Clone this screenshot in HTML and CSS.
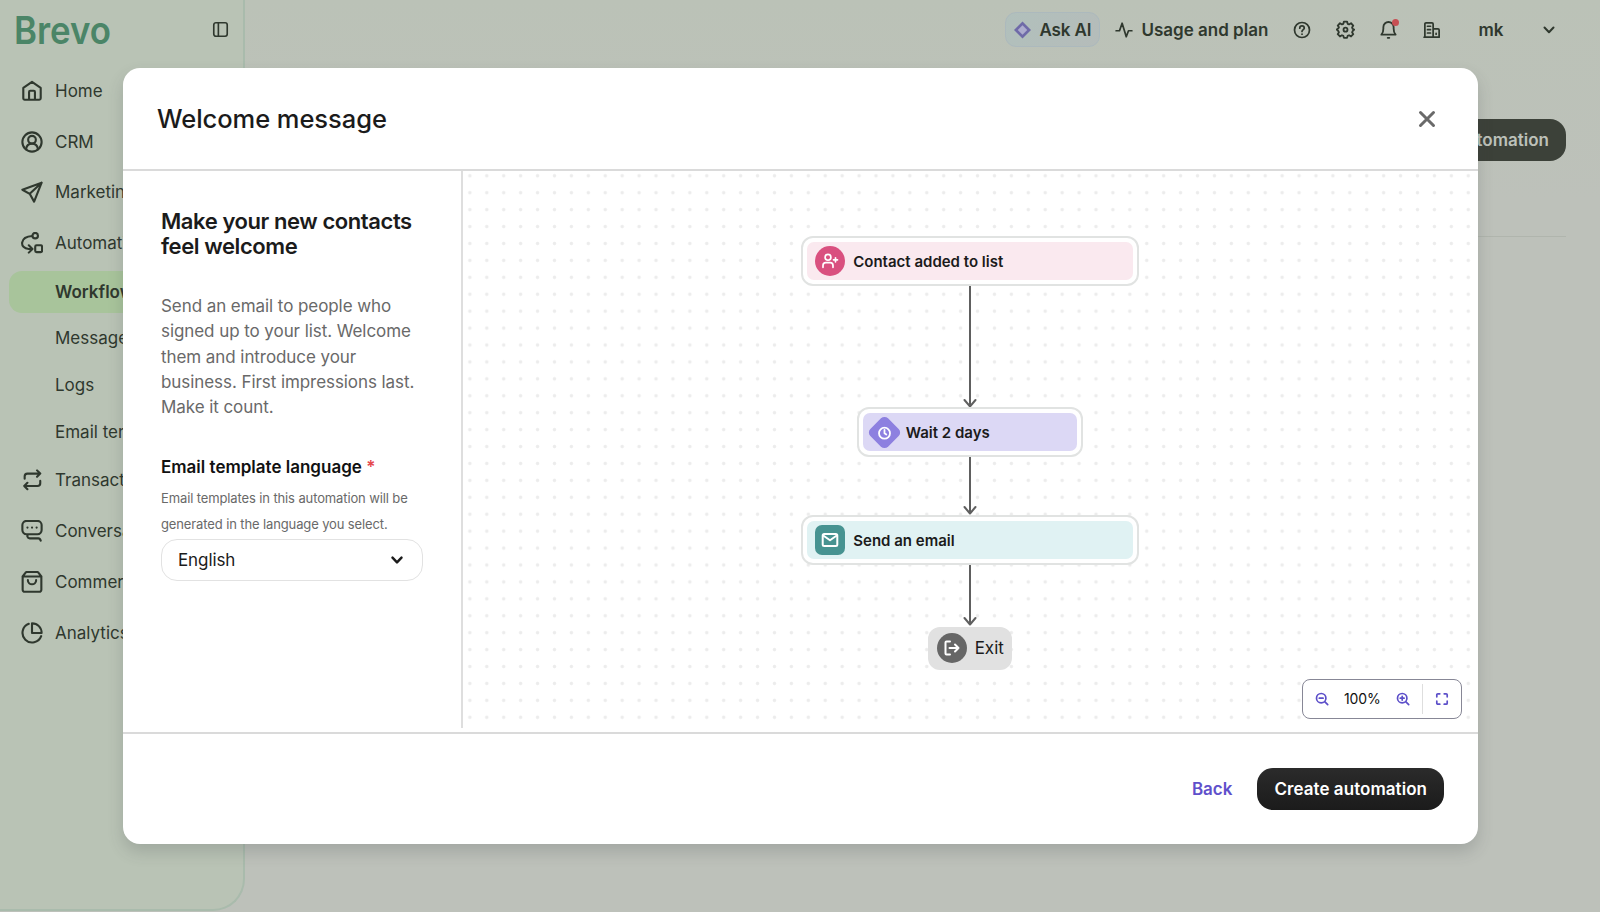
FILE: index.html
```html
<!DOCTYPE html>
<html lang="en">
<head>
    <meta charset="UTF-8">
    <meta name="viewport" content="width=device-width, initial-scale=1.0">
    <title>Brevo - Welcome message</title>
    <link rel="stylesheet" href="styles.css">
</head>
<body>
    <div class="app">
        <aside class="sidebar">
            <div class="sidebar-head">
                <svg class="logo" width="104" height="48" viewBox="0 0 104 48">
                    <text x="0" y="38" textLength="97" lengthAdjust="spacingAndGlyphs">Brevo</text>
                </svg>
                <svg class="icon" width="17" height="17" viewBox="0 0 24 24"><rect x="2.5" y="2.5" width="19" height="19" rx="3"/><path d="M9 2.5v19"/></svg>
            </div>
            <nav class="menu">
                <a class="item">
                    <svg class="icon" width="22" height="22" viewBox="0 0 24 24"><path d="M2.500 8.500 12 2l9.500 6.500V20a1.500 1.500 0 0 1-1.500 1.500H4A1.500 1.500 0 0 1 2.500 20zM8.800 21.500V13a1.200 1.200 0 0 1 1.200-1.200h4a1.200 1.200 0 0 1 1.200 1.200v8.500"/></svg>
                    Home
                </a>
                <a class="item">
                    <svg class="icon" width="22" height="22" viewBox="0 0 24 24"><circle cx="12" cy="12" r="10.500"/><circle cx="12" cy="9.500" r="4.200"/><path d="M5.500 20c.4-4 3-6.200 6.500-6.200s6.100 2.200 6.500 6.200"/></svg>
                    CRM
                </a>
                <a class="item">
                    <svg class="icon" width="22" height="22" viewBox="0 0 24 24"><path d="M22.500 1.800 1.500 9.500l8 4.500 4.800 8.500zM22.500 1.800 9.500 14"/></svg>
                    Marketing
                </a>
                <a class="item">
                    <svg class="icon" width="22" height="22" viewBox="0 0 24 24"><circle cx="15.500" cy="4" r="3"/><rect x="15.500" y="14.500" width="7.500" height="7.500" rx="1.500"/><path d="M12.300 4.300C-1.500 5-2 18 8.500 18.500H12M8.500 14.500l4 4-4 4"/></svg>
                    Automations
                </a>
                <div class="submenu">
                    <a class="sub active">Workflows</a>
                    <a class="sub">Messages</a>
                    <a class="sub">Logs</a>
                    <a class="sub">Email templates</a>
                </div>
                <a class="item">
                    <svg class="icon" width="22" height="22" viewBox="0 0 24 24"><path d="M17.500 1.500 21 5l-3.500 3.500M21 5H7a3 3 0 0 0-3 3v2.500M7 15l-3.500 3.500L7 22M3.500 18.500H18a3 3 0 0 0 3-3V13"/></svg>
                    Transactional
                </a>
                <a class="item">
                    <svg class="icon" width="22" height="22" viewBox="0 0 24 24"><path d="M8 15.500H6a4.500 4.500 0 0 1-4.500-4.500V5.500A4.500 4.500 0 0 1 6 1h12a4.500 4.500 0 0 1 4.500 4.500V11a4.500 4.500 0 0 1-4.500 4.500H8c-2 1.500-1 4.500 1.500 4.500H19c1 0 2 .8 2.500 2.500"/><path d="M7 8.300h.1M12 8.300h.1M17 8.300h.1"/></svg>
                    Conversations
                </a>
                <a class="item">
                    <svg class="icon" width="22" height="22" viewBox="0 0 24 24"><path d="M1.800 6v14.500A2.200 2.200 0 0 0 4 22.700h16a2.200 2.200 0 0 0 2.200-2.200V6M1.800 6h20.400M1.800 6 5 1.800Q5.500 1 6.500 1h11q1 0 1.500.8L22.200 6M7.500 10c0 6 9 6 9 0"/></svg>
                    Commerce
                </a>
                <a class="item">
                    <svg class="icon" width="22" height="22" viewBox="0 0 24 24"><path d="M8.500 2A10.500 10.500 0 1 0 22 15.500M12 1.500V12h10.500C22.500 6 18 1.500 12 1.500z"/></svg>
                    Analytics
                </a>
            </nav>
        </aside>

        <main class="page">
            <header class="topbar">
                <button class="ask-ai">
                    <svg width="17" height="18" viewBox="0 0 18 18"><path class="gem" d="M9 0 18 9 9 18 0 9z"/><path class="gem-mid" d="M9 4 14 9 9 14 4 9z"/></svg>
                    Ask AI
                </button>
                <span class="usage">
                    <svg class="icon" width="18" height="18" viewBox="0 0 24 24"><path d="M1.500 13H6L9.500 3l5.500 18 3-8h4.500"/></svg>
                    Usage and plan
                </span>
                <svg class="icon" width="18" height="18" viewBox="0 0 24 24"><circle cx="12" cy="12" r="10"/><path d="M9 9.500c0-4 6-4 6 0 0 2-3 2-3 4.500M12 17.500h.1"/></svg>
                <svg class="icon" width="19" height="19" viewBox="0 0 24 24"><path d="M10 2h4l.7 2.800 1.800.8 2.500-1.500 2.800 2.900-1.500 2.400.7 1.800L23 12l-2 2-.7 1.500 1.500 2.400L19 20.800l-2.500-1.500-1.800.8L14 22.500h-4l-.7-2.400-1.800-.8L5 20.800l-2.800-2.900 1.500-2.400L3 14l-2-2 2-1.500.7-1.200L2.200 7 5 4.100l2.500 1.500 1.800-.8z"/><circle cx="12" cy="12.200" r="2.500"/></svg>
                <span class="bell">
                    <svg class="icon" width="19" height="19" viewBox="0 0 24 24"><path d="M3 18.500c3-3 2.500-5 2.500-9.500a6.500 6.500 0 0 1 13 0c0 4.500-.5 6.500 2.500 9.500zM11 22.500h2"/></svg>
                    <i class="badge"></i>
                </span>
                <svg class="icon" width="18" height="18" viewBox="0 0 24 24"><path d="M2.500 21.500V4A1.500 1.500 0 0 1 4 2.500h8A1.500 1.500 0 0 1 13.500 4v17.500M13.500 10.500h6.500a1.500 1.500 0 0 1 1.500 1.500v9.500h-20M6 7h4M6 11.500h4M6 16h4M17.500 16.500v1"/></svg>
                <span class="account">mk</span>
                <svg class="icon chevron" width="14" height="14" viewBox="0 0 14 14"><path d="m2.500 4.500 4.500 4.700 4.500-4.700"/></svg>
            </header>
            <div class="page-head">
                <button class="dark-btn dimmed">Create an automation</button>
            </div>
        </main>
    </div>

    <div class="modal">
        <header class="modal-head">
            <h1>Welcome message</h1>
            <svg class="close" width="18" height="18" viewBox="0 0 18 18"><path d="m2.500 2.500 13 13M15.500 2.500l-13 13"/></svg>
        </header>

        <div class="modal-body">
            <section class="details">
                <h2>Make your new contacts feel welcome</h2>
                <p class="description">Send an email to people who signed up to your list. Welcome them and introduce your business. First impressions last. Make it count.</p>
                <label>Email template language <span class="required">*</span></label>
                <p class="hint">Email templates in this automation will be generated in the language you select.</p>
                <div class="select">
                    English
                    <svg width="14" height="14" viewBox="0 0 14 14"><path d="m2.500 4.700 4.500 4.600 4.500-4.600"/></svg>
                </div>
            </section>

            <section class="canvas">
                <div class="node wide">
                    <div class="node-inner pink">
                        <span class="node-icon round">
                            <svg width="18" height="18" viewBox="0 0 18 18"><circle cx="7" cy="5.300" r="2.900"/><path d="M2 15.300v-1.800a2.800 2.800 0 0 1 2.800-2.800h4.400a2.800 2.800 0 0 1 2.800 2.800v1.800M14.500 5.800v4M12.500 7.800h4"/></svg>
                        </span>
                        Contact added to list
                    </div>
                </div>
                <svg class="arrow" width="14" height="121" viewBox="0 0 14 121"><path d="M7 0v120M1.500 114l5.500 6.500 5.500-6.500"/></svg>
                <div class="node">
                    <div class="node-inner purple">
                        <span class="node-icon diamond">
                            <svg width="14" height="14" viewBox="0 0 14 14"><circle cx="7" cy="7" r="5.500"/><path d="M7 3.800V7l1.800 1.300"/></svg>
                        </span>
                        Wait 2 days
                    </div>
                </div>
                <svg class="arrow" width="14" height="58" viewBox="0 0 14 58"><path d="M7 0v56M1.500 50l5.500 6.500 5.500-6.500"/></svg>
                <div class="node wide">
                    <div class="node-inner teal">
                        <span class="node-icon square">
                            <svg width="18" height="18" viewBox="0 0 18 18"><rect x="1.700" y="3" width="14.600" height="12" rx="1.500"/><path d="m2.200 4.500 6.800 4.800 6.800-4.800"/></svg>
                        </span>
                        Send an email
                    </div>
                </div>
                <svg class="arrow" width="14" height="62" viewBox="0 0 14 62"><path d="M7 0v59M1.500 53l5.500 6.500 5.500-6.500"/></svg>
                <div class="exit">
                    <span class="node-icon round">
                        <svg width="18" height="18" viewBox="0 0 18 18"><path d="M7 2.500H3.500a1 1 0 0 0-1 1v11a1 1 0 0 0 1 1H7M6.500 9h9M12 5.500 15.500 9 12 12.500"/></svg>
                    </span>
                    Exit
                </div>

                <div class="zoom">
                    <svg width="14" height="14" viewBox="0 0 14 14"><circle cx="6.200" cy="6.200" r="4.700"/><path d="m9.700 9.700 3 3M4.300 6.200h3.800"/></svg>
                    <span class="zoom-value">100%</span>
                    <svg width="14" height="14" viewBox="0 0 14 14"><circle cx="6.200" cy="6.200" r="4.700"/><path d="m9.700 9.700 3 3M4.300 6.200h3.800M6.200 4.300v3.800"/></svg>
                    <span class="zoom-sep"></span>
                    <svg width="14" height="14" viewBox="0 0 14 14"><path d="M1.800 4.800v-2a1 1 0 0 1 1-1h2M9.200 1.800h2a1 1 0 0 1 1 1v2M12.200 9.200v2a1 1 0 0 1-1 1h-2M4.800 12.200h-2a1 1 0 0 1-1-1v-2"/></svg>
                </div>
            </section>
        </div>

        <footer class="modal-foot">
            <a class="back">Back</a>
            <button class="dark-btn">Create automation</button>
        </footer>
    </div>
</body>
</html>
```
FILE: styles.css
```css
* {
    box-sizing: border-box;
}
body {
    margin: 0;
    height: 912px;
    overflow: hidden;
    font-family: Inter, sans-serif;
    font-size: 17px;
    background: #bdc1ba;
    color: #1b1b1b;
}
h1, h2, p {
    margin: 0;
}
button {
    border: none;
    font-family: inherit;
    cursor: pointer;
}
svg {
    display: block;
    flex: none;
    fill: none;
    stroke: currentColor;
    stroke-width: 2;
    stroke-linecap: round;
    stroke-linejoin: round;
}
.icon {
    stroke-width: 2.300;
}

/* page behind the modal */
.app {
    display: flex;
    height: 912px;
    color: #2f382e;
}
.sidebar {
    width: 245px;
    height: 911px;
    background: #b9c3b5;
    border-right: 2px solid #a9bbac;
    border-bottom: 2px solid #a9bbac;
    border-bottom-right-radius: 32px;
}
.sidebar-head {
    display: flex;
    justify-content: space-between;
    align-items: center;
    padding: 11px 14px 0 14px;
    height: 48px;
}
.logo text {
    font-family: Inter, sans-serif;
    font-size: 38.5px;
    font-weight: 600;
    fill: #4b8567;
    stroke: none;
}
.menu {
    display: flex;
    flex-direction: column;
    gap: 8.5px;
    padding: 21.700px 8px 0 9px;
}
.item {
    display: flex;
    align-items: center;
    gap: 12px;
    height: 42.300px;
    padding-left: 12px;
    white-space: nowrap;
}
.submenu {
    display: flex;
    flex-direction: column;
    gap: 4.300px;
    margin: -2px 0 -2.300px;
}
.sub {
    height: 42.300px;
    line-height: 42.300px;
    padding-left: 46px;
    border-radius: 13px;
    white-space: nowrap;
}
.sub.active {
    background: #a8c49b;
    font-weight: 600;
}
.page {
    flex: 1;
    background: linear-gradient(#bbc2b7, #bdc1ba 200px);
}
.topbar {
    display: flex;
    align-items: center;
    justify-content: flex-end;
    height: 59px;
    padding-right: 44px;
    font-weight: 600;
}
.ask-ai {
    display: flex;
    align-items: center;
    gap: 8px;
    height: 35px;
    margin-right: 15px;
    padding: 0 8px;
    border: 1px solid #acb9bd;
    border-radius: 11px;
    background: linear-gradient(120deg, #b1c0bc, #b5bcba);
    color: inherit;
    font-size: 17px;
    font-weight: 600;
    letter-spacing: -0.1px;
}
.gem {
    fill: #6f6aa8;
    stroke: none;
}
.gem-mid {
    fill: #adacce;
    stroke: none;
}
.usage {
    display: flex;
    gap: 8px;
    align-items: center;
    margin-right: 24.500px;
}
.usage ~ .icon, .bell {
    margin-right: 24.800px;
}
.bell {
    position: relative;
}
.badge {
    position: absolute;
    top: -1px;
    right: -1px;
    width: 7px;
    height: 7px;
    border-radius: 50%;
    background: #c74f53;
}
.account {
    margin: 0 38.500px 0 12.500px;
}
.topbar .chevron {
    margin-right: 0;
    stroke-width: 2;
}
.page-head {
    display: flex;
    justify-content: flex-end;
    align-items: flex-start;
    height: 178px;
    margin: 0 34px;
    padding-top: 59.500px;
    border-bottom: 1px solid #b0b5ad;
}
.dark-btn {
    height: 42.500px;
    padding: 0 17px;
    border-radius: 16px;
    background: linear-gradient(#2b2b2b, #1b1b1b);
    color: #fff;
    font-size: 17px;
    font-weight: 600;
}
.modal-foot .dark-btn {
    letter-spacing: 0.05px;
}
.dark-btn.dimmed {
    background: #3c4139;
    color: #bdc1ba;
}

/* modal */
.modal {
    position: absolute;
    top: 68px;
    left: 123px;
    display: flex;
    flex-direction: column;
    width: 1354.500px;
    height: 776px;
    border-radius: 17px;
    background: #fff;
    box-shadow: 0 8px 16px rgba(60, 65, 70, 0.2);
}
.modal-head {
    display: flex;
    align-items: center;
    justify-content: space-between;
    height: 103px;
    padding: 0 42px 0 34px;
    border-bottom: 2px solid #dadada;
}
h1 {
    font-size: 25.500px;
    font-weight: 500;
    letter-spacing: -0.050px;
}
.close {
    color: #6a6a6a;
    stroke-width: 3;
}
.modal-body {
    display: flex;
    height: 561px;
}
.details {
    width: 340px;
    height: 557px;
    padding: 38px 38px 0;
    border-right: 2px solid #dedede;
}
h2 {
    font-size: 22px;
    line-height: 25.400px;
    font-weight: 600;
    letter-spacing: -0.420px;
}
.description {
    margin-top: 34px;
    line-height: 25.400px;
    letter-spacing: -0.070px;
    color: #696969;
}
label {
    display: block;
    margin-top: 34px;
    line-height: 25.400px;
    font-weight: 600;
    color: #111;
}
.required {
    color: #e5484d;
}
.hint {
    margin-top: 6px;
    font-size: 13px;
    line-height: 25.400px;
    letter-spacing: -0.120px;
    color: #696969;
}
.select {
    display: flex;
    align-items: center;
    justify-content: space-between;
    width: 262px;
    height: 42px;
    margin-top: 2px;
    padding: 0 18px 0 16px;
    border: 1px solid #e2e2e2;
    border-radius: 16px;
    letter-spacing: -0.100px;
}
.select svg {
    stroke-width: 2.500;
}

/* workflow preview */
.canvas {
    position: relative;
    flex: 1;
    display: flex;
    flex-direction: column;
    align-items: center;
    padding-top: 65px;
    padding-right: 1px;
    background-image: radial-gradient(circle, #ececec 1.300px, transparent 2.200px);
    background-size: 16.930px 16.930px;
    background-position: -1.600px -3.700px;
}
.node {
    width: 226px;
    height: 50px;
    padding: 4px;
    border: 2px solid #e1e3e2;
    border-radius: 12px;
    background: #fff;
}
.node.wide {
    width: 338px;
}
.node-inner {
    display: flex;
    align-items: center;
    gap: 8.500px;
    height: 38px;
    padding-left: 8px;
    border-radius: 7px;
    font-size: 15px;
    font-weight: 600;
}
.node-icon {
    display: grid;
    place-items: center;
    width: 30px;
    height: 30px;
    color: #fff;
}
.round {
    border-radius: 50%;
}
.pink {
    background: #fae9ef;
}
.pink .node-icon {
    background: #d9507f;
}
.pink svg {
    stroke-width: 1.700;
}
.purple {
    gap: 9px;
    background: #dcd8f5;
}
.purple .diamond {
    width: 25px;
    height: 25px;
    margin-left: 1px;
    border-radius: 5px;
    background: #8d80e0;
    transform: rotate(45deg);
}
.diamond svg {
    stroke-width: 1.800;
    transform: rotate(-45deg);
}
.teal {
    background: #e0f2f3;
}
.square {
    border-radius: 7px;
    background: #479391;
}
.arrow {
    color: #5f5f5f;
}
.exit {
    display: flex;
    align-items: center;
    gap: 8px;
    height: 42.500px;
    padding: 0 8px 0 9px;
    border-radius: 12px;
    background: #e1e1e1;
}
.exit .node-icon {
    background: #666;
}
.zoom {
    position: absolute;
    right: 16px;
    bottom: 13px;
    display: flex;
    align-items: center;
    width: 159.500px;
    height: 40.500px;
    padding-left: 12px;
    border: 1px solid #878796;
    border-radius: 8px;
    background: #fff;
    color: #5c4fc9;
}
.zoom svg {
    stroke-width: 1.700;
}
.zoom-value {
    margin: 0 15px;
    color: #111;
    font-size: 14px;
    letter-spacing: -0.100px;
}
.zoom-sep {
    width: 1px;
    height: 30px;
    margin: 0 12px;
    background: #dedede;
}
.modal-foot {
    display: flex;
    align-items: center;
    justify-content: flex-end;
    gap: 25px;
    flex: 1;
    padding-right: 33.500px;
    border-top: 2px solid #dadada;
}
.back {
    color: #5f50cb;
    font-weight: 600;
}
```
